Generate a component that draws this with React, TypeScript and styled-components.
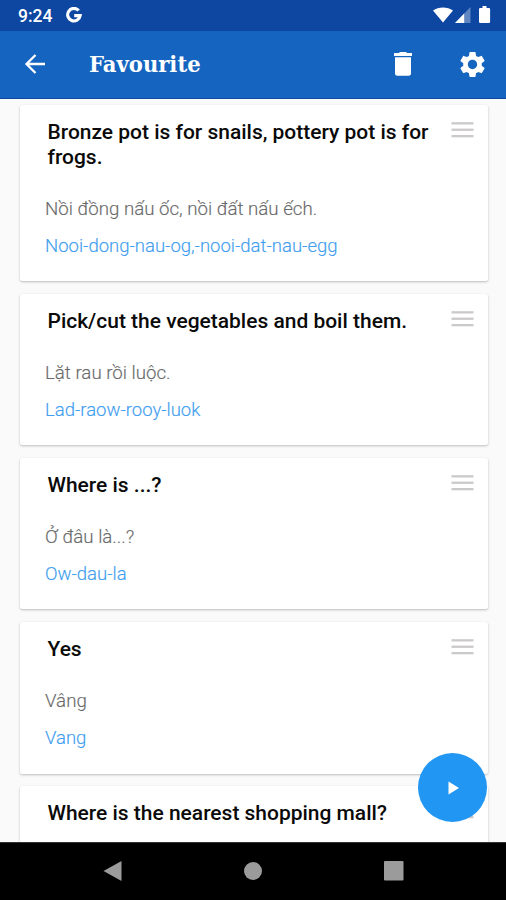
import React from 'react';
import styled, { createGlobalStyle } from 'styled-components';

const GlobalStyle = createGlobalStyle`
  * { box-sizing: border-box; }
  body { margin: 0; background: #fafafa; font-family: Roboto, "Liberation Sans", sans-serif; }
`;

const Screen = styled.div`
  position: relative;
  display: flex;
  flex-direction: column;
  width: 506px;
  height: 900px;
  overflow: hidden;
  background: #fafafa;
`;

const StatusBar = styled.div`
  display: flex;
  flex: none;
  align-items: center;
  justify-content: space-between;
  height: 30.5px;
  padding: 0 14.5px 0 18px;
  background: #0d47a1;
  color: #fff;
`;

const StatusGroup = styled.div<{ $gap: number }>`
  display: flex;
  align-items: center;
  gap: ${(p) => p.$gap}px;
  height: 100%;
`;

const Clock = styled.span`
  font-size: 17.5px;
  font-weight: 500;
  line-height: 30px;
  padding-top: 1px;
`;

const Toolbar = styled.header`
  display: flex;
  flex: none;
  align-items: center;
  height: 68px;
  padding: 0 18.5px 0 24px;
  background: #1565c0;
  border-bottom: 1.5px solid #0d47a1;
`;

const Title = styled.h1`
  flex: 1;
  margin: 0 0 0 43px;
  color: #fff;
  font-family: "DejaVu Serif", serif;
  font-size: 22px;
  font-weight: 700;
  line-height: 30px;
  transform: scaleX(0.96);
  transform-origin: left;
`;

const IconButton = styled.button<{ $gap?: number }>`
  display: flex;
  margin: 0 0 0 ${(p) => p.$gap ?? 0}px;
  padding: 0;
  border: 0;
  background: none;
`;

const List = styled.main`
  display: flex;
  flex: 1;
  flex-direction: column;
  gap: 12.3px;
  min-height: 0;
  padding: 6.5px 18.5px 0 20px;
  overflow: hidden;
`;

const Card = styled.article`
  flex: none;
  padding: 15.3px 14px 22.7px 25px;
  border-radius: 2.5px;
  background: #fff;
  box-shadow: 0 1px 2.5px rgba(0, 0, 0, 0.25);
`;

const CardHead = styled.div`
  display: flex;
  align-items: flex-start;
  justify-content: space-between;
  margin-bottom: 27.3px;
  padding-left: 2.5px;
`;

const Phrase = styled.h2`
  width: 390px;
  margin: 0;
  color: #0a0a0a;
  font-size: 20.98px;
  font-weight: 500;
  line-height: 24.5px;
`;

const Handle = styled.svg`
  display: block;
  flex: none;
  width: 23px;
  height: 16px;
  margin-top: 1.7px;
  fill: #cbc9ca;
`;

const Line = styled.p<{ $accent?: boolean }>`
  margin: 0;
  color: ${(p) => (p.$accent ? '#429eef' : '#6a6a6a')};
  font-size: ${(p) => (p.$accent ? 18.52 : 18.7)}px;
  font-weight: 300;
  line-height: 25px;
  -webkit-text-stroke: 0.15px currentColor;
  & + & { margin-top: 12px; }
`;

const PlayButton = styled.button`
  position: absolute;
  left: 418px;
  top: 753px;
  display: grid;
  place-items: center;
  width: 69px;
  height: 69px;
  padding: 0;
  border: 0;
  border-radius: 50%;
  background: #2196f3;
`;

const NavBar = styled.nav`
  display: grid;
  grid-template-columns: repeat(3, 140.5px);
  flex: none;
  align-items: center;
  justify-content: center;
  justify-items: center;
  height: 58.5px;
  background: #000;
  border-top: 1px solid #333;
`;

const cards = [
  { phrase: 'Bronze pot is for snails, pottery pot is for frogs.', text: 'Nồi đồng nấu ốc, nồi đất nấu ếch.', sound: 'Nooi-dong-nau-og,-nooi-dat-nau-egg' },
  { phrase: 'Pick/cut the vegetables and boil them.', text: 'Lặt rau rồi luộc.', sound: 'Lad-raow-rooy-luok' },
  { phrase: 'Where is ...?', text: 'Ở đâu là...?', sound: 'Ow-dau-la' },
  { phrase: 'Yes', text: 'Vâng', sound: 'Vang' },
  { phrase: 'Where is the nearest shopping mall?', text: '', sound: '' },
];

export default function App() {
  return (
    <Screen>
      <GlobalStyle />
      <StatusBar>
        <StatusGroup $gap={14}>
          <Clock>9:24</Clock>
          <svg width="16" height="16" viewBox="0 0 16 16" fill="none" stroke="#fff" strokeWidth="3.1">
            <path d="M12.7 3.5A6.3 6.3 0 1 0 14.2 8.6H8.2" />
          </svg>
        </StatusGroup>
        <StatusGroup $gap={2.5}>
          <svg width="20" height="16" viewBox="0 0 20 16" fill="#fff">
            <path d="M0 3.6C5.6-.6 14.4-.6 20 3.6L10 15.5Z" />
          </svg>
          <svg width="16" height="16" viewBox="0 0 16 16">
            <path d="M0 16 15.5 0V16Z" fill="#fff" opacity=".35" />
            <path d="M0 16 9.2 6.5V16Z" fill="#fff" />
          </svg>
          <svg width="18" height="18" viewBox="0 0 18 18" fill="#fff">
            <path d="M8.5 0h4v2h2.4q1.200 0 1.200 1.200v12.600q0 1.200-1.200 1.200H6.200q-1.200 0-1.200-1.200V3.200Q5 2 6.200 2h2.300Z" />
          </svg>
        </StatusGroup>
      </StatusBar>
      <Toolbar>
        <IconButton aria-label="Back">
          <svg width="22" height="20" viewBox="0 0 22 20" fill="none" stroke="#fff" strokeWidth="2.3">
            <path d="M21 10H3M11.5 1 2.5 10l9 9" />
          </svg>
        </IconButton>
        <Title>Favourite</Title>
        <IconButton aria-label="Delete">
          <svg width="18" height="24" viewBox="0 0 18 24" fill="#fff">
            <path d="M0 1h4.8l1.2-1h6l1.2 1H18v3H0ZM1 5.3h16v16q0 2.5-2.5 2.5h-11Q1 23.8 1 21.3Z" />
          </svg>
        </IconButton>
        <IconButton aria-label="Settings" $gap={45}>
          <svg width="31" height="31" viewBox="0 0 24 24" fill="#fff">
            <path d="M19.140 12.940c.040-.300.060-.610.060-.940 0-.320-.020-.640-.070-.940l2.030-1.580c.180-.140.230-.410.120-.610l-1.920-3.320c-.120-.220-.370-.290-.590-.220l-2.390.960c-.500-.380-1.030-.700-1.620-.940l-.360-2.540c-.040-.240-.240-.410-.480-.410h-3.840c-.240 0-.430.170-.470.410l-.360 2.540c-.590.240-1.130.570-1.620.940l-2.390-.960c-.220-.080-.470 0-.590.220L2.740 8.870c-.120.210-.080.470.120.610l2.030 1.580c-.050.300-.090.630-.090.940s.020.640.070.940l-2.030 1.580c-.180.140-.230.410-.120.610l1.920 3.320c.120.220.370.290.590.220l2.390-.960c.500.380 1.030.700 1.620.940l.360 2.540c.050.240.240.410.480.410h3.840c.240 0 .440-.170.470-.410l.360-2.540c.590-.240 1.130-.560 1.620-.940l2.390.960c.220.080.470 0 .590-.220l1.920-3.320c.120-.220.070-.470-.120-.610l-2.010-1.580zM12 15.600c-1.980 0-3.600-1.620-3.600-3.600s1.620-3.600 3.600-3.600 3.600 1.620 3.600 3.600-1.620 3.600-3.600 3.600z" />
          </svg>
        </IconButton>
      </Toolbar>
      <List>
        {cards.map((card) => (
          <Card key={card.phrase}>
            <CardHead>
              <Phrase>{card.phrase}</Phrase>
              <Handle viewBox="0 0 23 16">
                <rect x=".5" y=".2" width="22" height="2.3" />
                <rect x=".5" y="6.6" width="22" height="2.3" />
                <rect x=".5" y="13" width="22" height="2.3" />
              </Handle>
            </CardHead>
            <Line>{card.text}</Line>
            <Line $accent>{card.sound}</Line>
          </Card>
        ))}
      </List>
      <NavBar>
        <svg width="20" height="22" viewBox="0 0 20 22" fill="#9b9b9b">
          <path d="M18.5 1v20L.5 11Z" />
        </svg>
        <svg width="18" height="18" viewBox="0 0 18 18" fill="#9b9b9b">
          <circle cx="9" cy="9" r="9" />
        </svg>
        <svg width="20" height="20" viewBox="0 0 20 20" fill="#9b9b9b">
          <rect width="19.5" height="19.5" rx="1" />
        </svg>
      </NavBar>
      <PlayButton aria-label="Play">
        <svg width="12" height="14" viewBox="0 0 12 14" fill="#fff">
          <path d="M1.5.5v13L12 7Z" />
        </svg>
      </PlayButton>
    </Screen>
  );
}
